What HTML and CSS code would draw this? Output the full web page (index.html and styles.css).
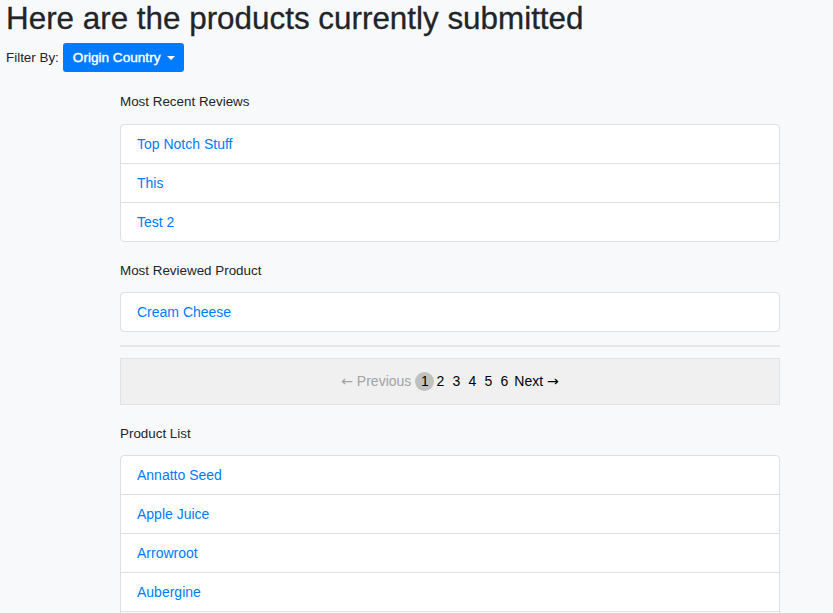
FILE: index.html
```html
<!DOCTYPE html>
<html>
<head>
<meta charset="utf-8">
<link rel="stylesheet" href="styles.css">
</head>
<body>
<div class="page">
  <h1 class="title">Here are the products currently submitted</h1>
  <div class="filter">
    <span class="filter-label">Filter By:</span>
    <button class="btn-drop">Origin Country<span class="caret"></span></button>
  </div>
  <div class="content">
    <div class="section-label first">Most Recent Reviews</div>
    <ul class="list">
      <li class="item"><a href="#">Top Notch Stuff</a></li>
      <li class="item"><a href="#">This</a></li>
      <li class="item"><a href="#">Test 2</a></li>
    </ul>
    <div class="section-label">Most Reviewed Product</div>
    <ul class="list">
      <li class="item"><a href="#">Cream Cheese</a></li>
    </ul>
    <hr class="rule">
    <div class="pager">
      <span class="pg disabled"><span class="arrow">←</span> Previous</span>
      <span class="pg current">1</span>
      <span class="pg num">2</span>
      <span class="pg num">3</span>
      <span class="pg num">4</span>
      <span class="pg num">5</span>
      <span class="pg num">6</span>
      <span class="pg next">Next <span class="arrow">→</span></span>
    </div>
    <div class="section-label">Product List</div>
    <ul class="list">
      <li class="item"><a href="#">Annatto Seed</a></li>
      <li class="item"><a href="#">Apple Juice</a></li>
      <li class="item"><a href="#">Arrowroot</a></li>
      <li class="item"><a href="#">Aubergine</a></li>
      <li class="item empty"></li>
    </ul>
  </div>
</div>
</body>
</html>
```

FILE: styles.css
```css
html, body {
  margin: 0;
  padding: 0;
  background: #f8f9fa;
  color: #212529;
  font-family: "Liberation Sans", Arial, sans-serif;
  font-size: 14px;
  line-height: 21px;
  overflow: hidden;
  height: 613px;
}
.page {
  padding: 0 6px;
}
.title {
  margin: 0;
  font-size: 31.4px;
  font-weight: normal;
  line-height: 38px;
  -webkit-text-stroke: 0.3px #212529;
}
.filter {
  display: flex;
  align-items: center;
  gap: 4px;
  margin-top: 5px;
}
.filter-label {
  font-size: 13.4px;
}
.btn-drop {
  display: inline-flex;
  align-items: center;
  height: 29px;
  padding: 0 9px 0 10px;
  background: #007bff;
  color: #fff;
  border: none;
  border-radius: 3px;
  font-family: "Liberation Sans", Arial, sans-serif;
  font-size: 13.6px;
  font-weight: normal;
  -webkit-text-stroke: 0.4px #fff;
}
.caret {
  display: inline-block;
  width: 0;
  height: 0;
  margin-left: 7px;
  border-top: 4px solid #fff;
  border-left: 4px solid transparent;
  border-right: 4px solid transparent;
}
.content {
  margin-left: 114px;
  width: 660px;
}
.section-label {
  margin-top: 18px;
  margin-bottom: 11px;
  font-size: 13.4px;
}
.section-label.first {
  margin-top: 19px;
  margin-bottom: 12px;
}
.list {
  list-style: none;
  margin: 0;
  padding: 0;
  background: #fff;
  border: 1px solid #dfdfdf;
  border-radius: 4px;
}
.item {
  padding: 8px 16px;
  line-height: 22px;
  min-height: 22px;
  border-top: 1px solid #dfdfdf;
}
.item:first-child {
  border-top: none;
}
.item a {
  color: #007bff;
  text-decoration: none;
}
.rule {
  margin: 13px 0 0;
  border: none;
  border-top: 2px solid #e6e7e8;
}
.pager {
  margin-top: 11px;
  height: 45px;
  background: #f0f0f0;
  border: 1px solid #e2e2e2;
  display: flex;
  align-items: center;
  justify-content: center;
  gap: 4px;
  font-size: 14px;
}
.pg {
  color: #000;
}
.pg.disabled {
  color: #a3a3a3;
}
.arrow {
  font-family: "DejaVu Sans", sans-serif;
  font-size: 14px;
}
.pg.current {
  width: 19px;
  height: 19px;
  margin-right: -4px;
  border-radius: 50%;
  background: #c0c0c0;
  display: inline-flex;
  align-items: center;
  justify-content: center;
}
.pg.num {
  width: 12px;
  text-align: center;
}
```
